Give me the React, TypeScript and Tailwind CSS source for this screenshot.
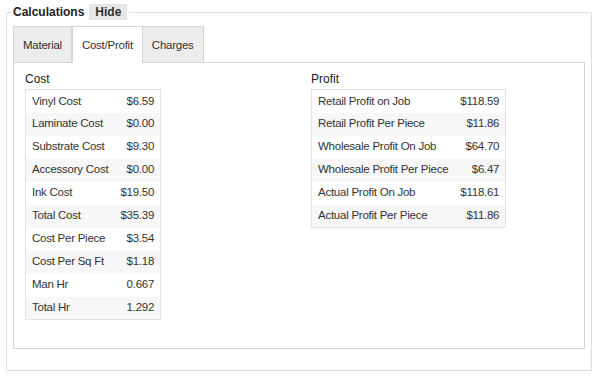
import { useState } from "react";

const costRows = [
  ["Vinyl Cost", "$6.59"],
  ["Laminate Cost", "$0.00"],
  ["Substrate Cost", "$9.30"],
  ["Accessory Cost", "$0.00"],
  ["Ink Cost", "$19.50"],
  ["Total Cost", "$35.39"],
  ["Cost Per Piece", "$3.54"],
  ["Cost Per Sq Ft", "$1.18"],
  ["Man Hr", "0.667"],
  ["Total Hr", "1.292"],
];

const profitRows = [
  ["Retail Profit on Job", "$118.59"],
  ["Retail Profit Per Piece", "$11.86"],
  ["Wholesale Profit On Job", "$64.70"],
  ["Wholesale Profit Per Piece", "$6.47"],
  ["Actual Profit On Job", "$118.61"],
  ["Actual Profit Per Piece", "$11.86"],
];

function DataTable({ rows }: { rows: string[][] }) {
  return (
    <table className="border border-[#e2e2e2] border-collapse">
      <tbody>
        {rows.map(([label, value], i) => (
          <tr key={label} className={i % 2 === 1 ? "bg-[#f7f7f7]" : "bg-white"}>
            <td className="h-[23px] pl-[6px] pr-[12px] whitespace-nowrap">{label}</td>
            <td className="h-[23px] pr-[6px] text-right whitespace-nowrap">{value}</td>
          </tr>
        ))}
      </tbody>
    </table>
  );
}

export default function App() {
  const [tab, setTab] = useState("Cost/Profit");
  const tabs = ["Material", "Cost/Profit", "Charges"];

  return (
    <div
      className="w-[600px] h-[379px] bg-white pt-[4px] pl-[6px] pr-[8px] text-[11.5px] tracking-[-0.25px] text-[#333]"
      style={{ fontFamily: '"Liberation Sans", Arial, sans-serif' }}
    >
      <fieldset className="border border-[#dedede] px-[6px] pb-[21px] h-[367px]">
        <legend className="-ml-[2px] px-[2px] flex items-center gap-[5px] h-[16px] text-[12px] tracking-normal">
          <span className="font-bold text-[#222]">Calculations</span>
          <button className="bg-[#e6e6e6] font-bold text-[#333] h-[16px] px-[6px] leading-[16px]">
            Hide
          </button>
        </legend>

        {/* Tabs */}
        <div className="flex mt-[6px]">
          {tabs.map((t) => (
            <button
              key={t}
              onClick={() => setTab(t)}
              className={
                t === tab
                  ? "h-[37px] pt-[2px] px-[9px] bg-white border border-[#d4d4d4] border-b-0 -mb-[1px] relative text-[#333]"
                  : "h-[36px] pt-[2px] px-[9px] bg-[#ececec] border border-[#d4d4d4] border-b-0 text-[#333] -ml-[1px] first:ml-0"
              }
            >
              {t}
            </button>
          ))}
        </div>

        {/* Panel */}
        <div className="border border-[#d4d4d4] h-[287px] px-[11px] pt-[9px]">
          <div className="flex">
            <div className="w-[286px]">
              <div className="text-[#222] text-[12px] tracking-normal mb-[3px] leading-[14px]">Cost</div>
              <DataTable rows={costRows} />
            </div>
            <div>
              <div className="text-[#222] text-[12px] tracking-normal mb-[3px] leading-[14px]">Profit</div>
              <DataTable rows={profitRows} />
            </div>
          </div>
        </div>
      </fieldset>
    </div>
  );
}
